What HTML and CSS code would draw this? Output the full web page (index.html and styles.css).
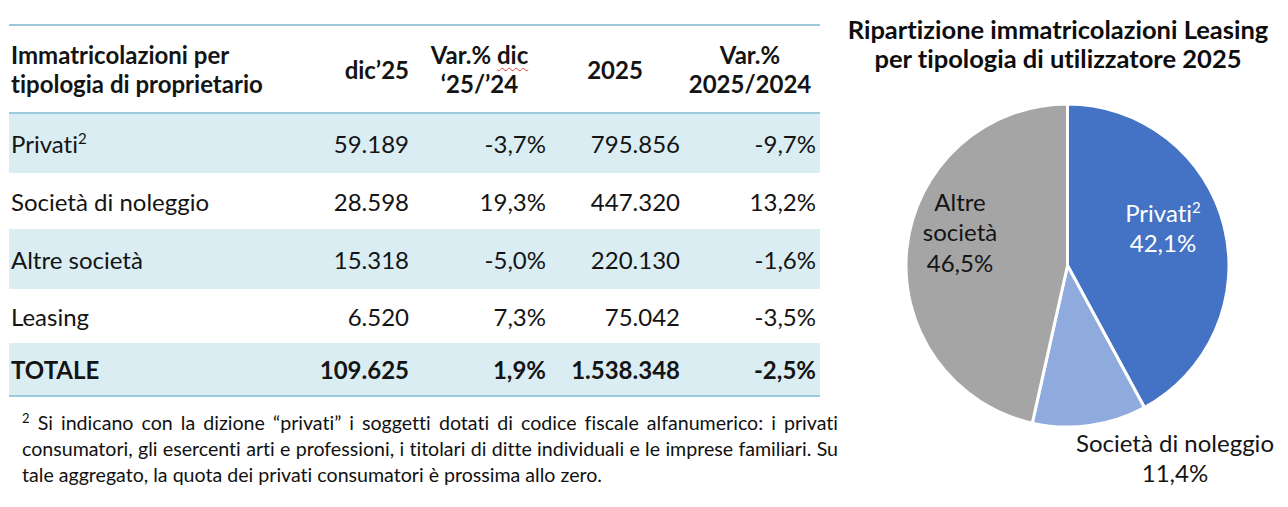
FILE: index.html
```html
<!DOCTYPE html>
<html lang="it">
<head>
<meta charset="utf-8">
<title>Immatricolazioni per tipologia di proprietario</title>
<link rel="stylesheet" href="styles.css">
</head>
<body>
<div class="page">
  <section class="left">
    <table class="data">
      <colgroup>
        <col class="c1"><col class="c2"><col class="c3"><col class="c4"><col class="c5">
      </colgroup>
      <thead>
        <tr>
          <th class="name">Immatricolazioni per<br>tipologia di proprietario</th>
          <th class="right">dic’25</th>
          <th>Var.% <span class="squiggle">dic</span><br>‘25/’24</th>
          <th>2025</th>
          <th>Var.%<br>2025/2024</th>
        </tr>
      </thead>
      <tbody>
        <tr class="shade r1">
          <td class="name">Privati<sup>2</sup></td><td>59.189</td><td>-3,7%</td><td>795.856</td><td>-9,7%</td>
        </tr>
        <tr class="r2">
          <td class="name">Società di noleggio</td><td>28.598</td><td>19,3%</td><td>447.320</td><td>13,2%</td>
        </tr>
        <tr class="shade r3">
          <td class="name">Altre società</td><td>15.318</td><td>-5,0%</td><td>220.130</td><td>-1,6%</td>
        </tr>
        <tr class="r4">
          <td class="name">Leasing</td><td>6.520</td><td>7,3%</td><td>75.042</td><td>-3,5%</td>
        </tr>
        <tr class="shade total r5">
          <td class="name">TOTALE</td><td>109.625</td><td>1,9%</td><td>1.538.348</td><td>-2,5%</td>
        </tr>
      </tbody>
    </table>
    <div class="footnote">
      <span class="fn-line just"><sup>2</sup> Si indicano con la dizione “privati” i soggetti dotati di codice fiscale alfanumerico: i privati</span>
      <span class="fn-line just">consumatori, gli esercenti arti e professioni, i titolari di ditte individuali e le imprese familiari. Su</span>
      <span class="fn-line">tale aggregato, la quota dei privati consumatori è prossima allo zero.</span>
    </div>
  </section>
  <section class="right">
    <h2 class="chart-title">Ripartizione immatricolazioni Leasing<br>per tipologia di utilizzatore 2025</h2>
    <svg class="pie" width="448" height="427" viewBox="0 0 448 427">
      <path class="slice privati" d="M227.5,186.5 L227.5,25 A161.5,161.5 0 0 1 304.42,328.5 Z"/>
      <path class="slice noleggio" d="M227.5,186.5 L304.42,328.5 A161.5,161.5 0 0 1 192.28,344.11 Z"/>
      <path class="slice altre" d="M227.5,186.5 L192.28,344.11 A161.5,161.5 0 0 1 227.5,25 Z"/>
      <text class="lbl lbl-white" x="323" y="143">Privati<tspan class="sup" dy="-9">2</tspan></text>
      <text class="lbl lbl-white" x="323" y="173">42,1%</text>
      <text class="lbl" x="120" y="132">Altre</text>
      <text class="lbl" x="120" y="162">società</text>
      <text class="lbl" x="120" y="193">46,5%</text>
      <text class="lbl" x="335" y="373">Società di noleggio</text>
      <text class="lbl" x="335" y="403">11,4%</text>
    </svg>
  </section>
</div>
</body>
</html>
```

FILE: styles.css
```css
* { box-sizing: border-box; }

html, body {
  margin: 0;
  padding: 0;
  background: #ffffff;
}

body {
  font-family: Lato, "Open Sans", "Liberation Sans", sans-serif;
  font-variant-ligatures: no-common-ligatures;
  color: #141414;
  width: 1288px;
  height: 507px;
  overflow: hidden;
}

.page {
  display: flex;
  align-items: flex-start;
}

.left {
  width: 840px;
  flex: none;
  padding: 24px 0 0 9px;
}

.data {
  width: 811px;
  table-layout: fixed;
  border-collapse: separate;
  border-spacing: 0;
  font-size: 24px;
}

.c1 { width: 281px; }
.c2 { width: 123px; }
.c3 { width: 137px; }
.c4 { width: 134px; }
.c5 { width: 136px; }

.data th {
  font-weight: 700;
  line-height: 29px;
  padding: 14px 4px 14px 0;
  text-align: center;
  vertical-align: middle;
  border-top: 2px solid #9ccadb;
  border-bottom: 2px solid #9ccadb;
  white-space: nowrap;
}

.data th.name,
.data td.name {
  text-align: left;
  padding-left: 2px;
}

.data th.right {
  text-align: right;
}

.squiggle {
  text-decoration: underline wavy #e0403a;
  text-decoration-thickness: 1px;
  text-underline-offset: 3px;
}

.data td {
  padding: 0 4px 0 0;
  text-align: right;
  vertical-align: middle;
  line-height: 29px;
  white-space: nowrap;
}

.data tr.shade td {
  background: #daedf3;
}

.data tr.r1 { height: 59px; }
.data tr.r2 { height: 56px; }
.data tr.r3 { height: 60px; }
.data tr.r4 { height: 54px; }
.data tr.r5 { height: 54px; }

.data tr.total td {
  font-weight: 700;
  border-bottom: 2px solid #9ccadb;
}

.data sup {
  font-size: 15px;
  line-height: 0;
  vertical-align: 9px;
}

.footnote {
  width: 816px;
  margin: 13px 0 0 13px;
  font-size: 19.6px;
  line-height: 26px;
  color: #111111;
}

.fn-line {
  display: block;
  white-space: nowrap;
}

.fn-line.just {
  text-align: justify;
  text-align-last: justify;
}

.footnote sup {
  font-size: 13px;
  line-height: 0;
  vertical-align: 7px;
}

.right {
  width: 448px;
  flex: none;
}

.chart-title {
  margin: 0;
  padding: 15px 12px 0 0;
  font-size: 25.5px;
  font-weight: 700;
  line-height: 29px;
  text-align: center;
  color: #0d0d0d;
  white-space: nowrap;
}

.pie {
  display: block;
  margin-top: 6px;
}

.slice {
  stroke: #ffffff;
  stroke-width: 3;
  stroke-linejoin: round;
}

.privati { fill: #4472c4; }
.noleggio { fill: #8faadc; }
.altre { fill: #a5a5a5; }

.lbl {
  font-family: Lato, "Open Sans", "Liberation Sans", sans-serif;
  font-size: 24px;
  fill: #141414;
  text-anchor: middle;
}

.lbl-white { fill: #ffffff; }

.lbl .sup { font-size: 15px; }
```
